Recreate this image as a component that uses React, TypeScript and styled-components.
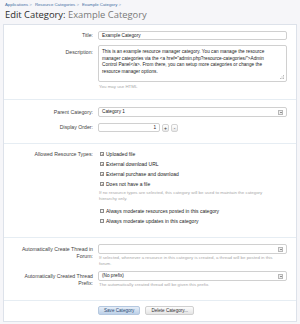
import styled, { createGlobalStyle } from "styled-components";

const GlobalStyle = createGlobalStyle`
  html, body {
    margin: 0;
    padding: 0;
    background: #f6f6f9;
  }
  body {
    font-family: "Liberation Sans", Arial, sans-serif;
  }
`;

const resourceTypes = [
  "Uploaded file",
  "External download URL",
  "External purchase and download",
  "Does not have a file",
];

const App = () => {
  return (
    <Page>
      <GlobalStyle />
      <Breadcrumb>
        <Crumb>Applications</Crumb>
        <Crumb>Resource Categories</Crumb>
        <Crumb>Example Category</Crumb>
      </Breadcrumb>
      <Heading>
        Edit Category: <Muted>Example Category</Muted>
      </Heading>

      <FormBox>
        <Section>
          <Row>
            <Label>Title:</Label>
            <Control>
              <TextBox>Example Category</TextBox>
            </Control>
          </Row>
          <Row>
            <Label $pad={4}>Description:</Label>
            <Control>
              <TextArea>
                This is an example resource manager category. You can manage the resource
                <br />
                manager categories via the &lt;a href="admin.php?resource-categories/"&gt;Admin
                <br />
                Control Panel&lt;/a&gt;. From there, you can setup more categories or change the
                <br />
                resource manager options.
                <Grip width="4" height="4" viewBox="0 0 4 4">
                  <rect x="3" y="0" width="1" height="1" fill="#bbb" />
                  <rect x="1.5" y="1.5" width="1" height="1" fill="#bbb" />
                  <rect x="3" y="1.5" width="1" height="1" fill="#bbb" />
                  <rect x="0" y="3" width="1" height="1" fill="#bbb" />
                  <rect x="1.5" y="3" width="1" height="1" fill="#bbb" />
                  <rect x="3" y="3" width="1" height="1" fill="#bbb" />
                </Grip>
              </TextArea>
              <Hint>You may use HTML</Hint>
            </Control>
          </Row>
        </Section>

        <Section $top={7} $bottom={11}>
          <Row>
            <Label $pad={2}>Parent Category:</Label>
            <Control>
              <Select>
                Category 1
                <Arrow />
              </Select>
            </Control>
          </Row>
          <Row $gap={6}>
            <Label>Display Order:</Label>
            <Control>
              <Spinner>
                <NumberBox>1</NumberBox>
                <SpinButton>+</SpinButton>
                <SpinButton>-</SpinButton>
              </Spinner>
            </Control>
          </Row>
        </Section>

        <Section $top={5} $bottom={11}>
          <Row>
            <Label $pad={2}>Allowed Resource Types:</Label>
            <Control>
              {resourceTypes.map((t) => (
                <CheckRow key={t}>
                  <Box $checked>✓</Box>
                  {t}
                </CheckRow>
              ))}
              <Hint $tight>
                If no resource types are selected, this category will be used to maintain the category
                <br />
                hierarchy only.
              </Hint>
              <Spacer />
              <CheckRow>
                <Box />
                Always moderate resources posted in this category
              </CheckRow>
              <CheckRow>
                <Box />
                Always moderate updates in this category
              </CheckRow>
            </Control>
          </Row>
        </Section>

        <Section $top={6} $bottom={12}>
          <Row>
            <Label $pad={2}>
              Automatically Create Thread in
              <br />
              Forum:
            </Label>
            <Control>
              <Select>
                <Arrow />
              </Select>
              <Hint $tight>
                If selected, whenever a resource in this category is created, a thread will be posted in this
                <br />
                forum.
              </Hint>
            </Control>
          </Row>
          <Row $gap={4}>
            <Label $pad={2}>
              Automatically Created Thread
              <br />
              Prefix:
            </Label>
            <Control>
              <Select>
                (No prefix)
                <Arrow />
              </Select>
              <Hint $tight>The automatically created thread will be given this prefix.</Hint>
            </Control>
          </Row>
        </Section>

        <Buttons>
          <Button $primary>Save Category</Button>
          <Button>Delete Category...</Button>
        </Buttons>
      </FormBox>
    </Page>
  );
};

export default App;

const Page = styled.div`
  width: 300px;
  height: 324px;
  padding: 2px 3px 0 3px;
  box-sizing: border-box;
  overflow: hidden;
`;

const Breadcrumb = styled.div`
  display: flex;
  gap: 3px;
  padding-left: 2px;
  font-size: 4.3px;
  line-height: 6px;
  color: #3f6da3;
`;

const Crumb = styled.span`
  &::after {
    content: " >";
    color: #8aa2c0;
  }
`;

const Heading = styled.h1`
  margin: 1px 0 3px 2px;
  font-family: "Open Sans", sans-serif;
  font-weight: 400;
  font-size: 9.4px;
  line-height: 12px;
  color: #2d2d2d;
`;

const Muted = styled.span`
  color: #7a7a7a;
`;

const FormBox = styled.div`
  background: #fff;
  border: 1px solid #dde2ea;
  height: 298px;
  box-sizing: border-box;
`;

const Section = styled.div<{ $top?: number; $bottom?: number }>`
  display: flex;
  flex-direction: column;
  padding: ${(p) => p.$top ?? 6}px 0 ${(p) => p.$bottom ?? 9}px;
  border-bottom: 1px solid #e6edf3;
`;

const Row = styled.div<{ $gap?: number }>`
  display: grid;
  grid-template-columns: 89px 189px;
  column-gap: 5px;
  margin-top: ${(p) => p.$gap ?? 5}px;
  &:first-child {
    margin-top: 0;
  }
`;

const Label = styled.div<{ $pad?: number }>`
  text-align: right;
  padding-top: ${(p) => p.$pad ?? 1}px;
  font-size: 5.2px;
  line-height: 7px;
  color: #444;
  white-space: nowrap;
`;

const Control = styled.div`
  display: flex;
  flex-direction: column;
  align-items: flex-start;
`;

const field = `
  box-sizing: border-box;
  background: #fff;
  border: 1px solid #d0d0d0;
  border-radius: 2px;
  font-size: 4.7px;
  color: #222;
`;

const TextBox = styled.div`
  ${field}
  width: 189px;
  height: 9px;
  line-height: 7px;
  padding: 0 3px;
`;

const TextArea = styled.div`
  ${field}
  position: relative;
  width: 189px;
  height: 37px;
  padding: 3px 3px;
  line-height: 6.7px;
  white-space: nowrap;
`;

const Grip = styled.svg`
  position: absolute;
  right: 2px;
  bottom: 2px;
`;

const Hint = styled.div<{ $tight?: boolean }>`
  margin-top: ${(p) => (p.$tight ? 1 : 2)}px;
  font-size: 4.4px;
  line-height: 6px;
  color: #a8a8a8;
  padding-left: 1px;
  white-space: nowrap;
`;

const Select = styled.div`
  ${field}
  position: relative;
  width: 189px;
  height: 10px;
  line-height: 8px;
  padding: 0 3px;
`;

const Arrow = styled.span`
  position: absolute;
  right: 3px;
  top: 2px;
  width: 5px;
  height: 5px;
  box-sizing: border-box;
  border: 1px solid #b8b8b8;
  background: #eee;
  &::after {
    content: "";
    position: absolute;
    left: 0.5px;
    top: 1px;
    border-left: 1px solid transparent;
    border-right: 1px solid transparent;
    border-top: 1.5px solid #333;
  }
`;

const Spinner = styled.div`
  display: flex;
  align-items: center;
  gap: 2px;
`;

const NumberBox = styled.div`
  ${field}
  width: 62px;
  height: 9px;
  line-height: 7px;
  text-align: right;
  padding: 0 3px;
`;

const SpinButton = styled.div`
  box-sizing: border-box;
  width: 7px;
  height: 8px;
  border: 1px solid #d3d3d3;
  border-radius: 2px;
  background: linear-gradient(#fff, #e8e8e8);
  font-size: 5px;
  line-height: 6px;
  text-align: center;
  color: #333;
`;

const CheckRow = styled.div`
  display: flex;
  align-items: center;
  gap: 2px;
  height: 10px;
  padding-left: 2px;
  font-size: 5px;
  color: #222;
`;

const Box = styled.span<{ $checked?: boolean }>`
  box-sizing: border-box;
  width: 4px;
  height: 4px;
  border: 0.6px solid #8c8c8c;
  background: #f4f4f4;
  font-size: 4px;
  line-height: 3px;
  text-align: center;
  color: ${(p) => (p.$checked ? "#333" : "transparent")};
  overflow: hidden;
`;

const Spacer = styled.div`
  height: 4px;
`;

const Buttons = styled.div`
  display: flex;
  gap: 5px;
  padding: 5px 0 0 94px;
`;

const Button = styled.div<{ $primary?: boolean }>`
  box-sizing: border-box;
  height: 9px;
  padding: 0 5px;
  border: 1px solid ${(p) => (p.$primary ? "#b5c8df" : "#d0d0d0")};
  border-radius: 2px;
  background: ${(p) =>
    p.$primary ? "linear-gradient(#e6eef8, #bcd0e8)" : "linear-gradient(#fdfdfd, #e4e4e4)"};
  font-size: 4.6px;
  line-height: 7px;
  color: ${(p) => (p.$primary ? "#2b4c74" : "#333")};
`;
